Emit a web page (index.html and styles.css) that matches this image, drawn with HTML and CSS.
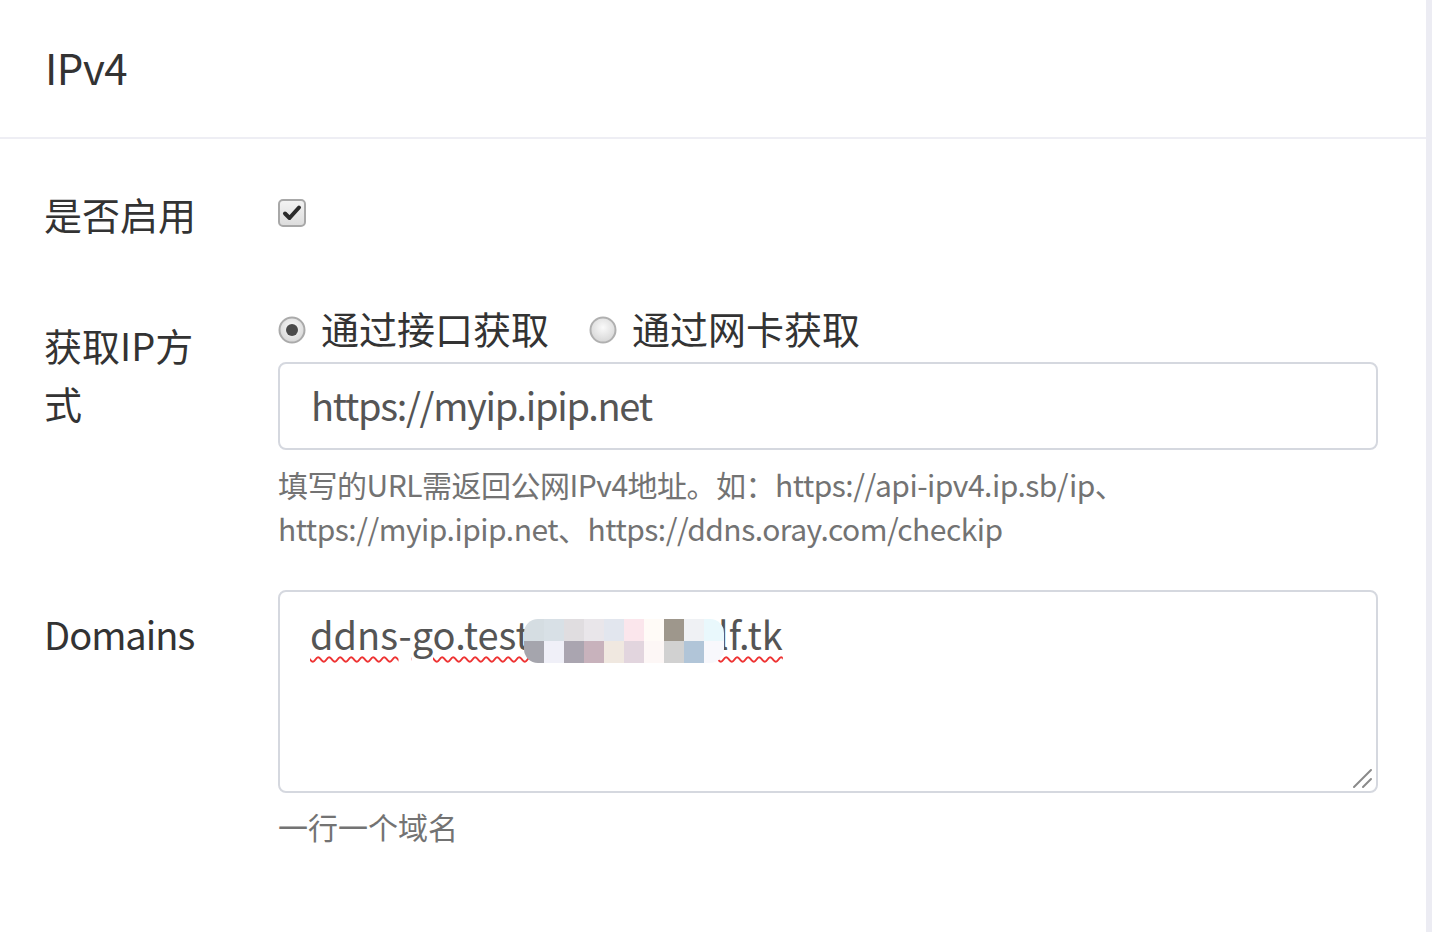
FILE: index.html
```html
<!DOCTYPE html>
<html lang="zh-CN">
<head>
<meta charset="utf-8">
<title>IPv4</title>
<link rel="stylesheet" href="styles.css">
</head>
<body>
<div class="panel">
  <div class="panel-heading"><h3 class="panel-title">IPv4</h3></div>
  <div class="panel-body">
    <div class="form-row row-enable">
      <label class="control-label">是否启用</label>
      <div class="controls">
        <span class="checkbox">
          <svg width="28" height="28" viewBox="0 0 28 28">
            <defs>
              <linearGradient id="cbg" x1="0" y1="0" x2="0" y2="1">
                <stop offset="0" stop-color="#f4f4f4"/>
                <stop offset="1" stop-color="#dcdcdc"/>
              </linearGradient>
            </defs>
            <rect x="1" y="1" width="26" height="26" rx="4" fill="url(#cbg)" stroke="#a8a8a8" stroke-width="2"/>
            <path d="M7 14.5 L11.5 19 L21 8.5" fill="none" stroke="#2b2b2b" stroke-width="4" stroke-linecap="round" stroke-linejoin="round"/>
          </svg>
        </span>
      </div>
    </div>

    <div class="form-row row-ip">
      <label class="control-label">获取IP方式</label>
      <div class="controls">
        <div class="radios">
          <label class="radio">
            <svg width="28" height="28" viewBox="0 0 28 28">
              <defs>
                <radialGradient id="rg1" cx="0.5" cy="0.4" r="0.6">
                  <stop offset="0" stop-color="#fafafa"/>
                  <stop offset="1" stop-color="#d6d6d6"/>
                </radialGradient>
              </defs>
              <circle cx="14" cy="14" r="12.5" fill="url(#rg1)" stroke="#aaaaaa" stroke-width="2"/>
              <circle cx="14" cy="14" r="6" fill="#4a4a4a"/>
            </svg>
            <span>通过接口获取</span>
          </label>
          <label class="radio">
            <svg width="28" height="28" viewBox="0 0 28 28">
              <defs>
                <radialGradient id="rg2" cx="0.5" cy="0.4" r="0.6">
                  <stop offset="0" stop-color="#fafafa"/>
                  <stop offset="1" stop-color="#d6d6d6"/>
                </radialGradient>
              </defs>
              <circle cx="14" cy="14" r="12.5" fill="url(#rg2)" stroke="#b0b0b0" stroke-width="2"/>
            </svg>
            <span>通过网卡获取</span>
          </label>
        </div>
        <div class="form-control input">https://myip.ipip.net</div>
        <p class="help-block">填写的URL需返回公网IPv4地址。如：https://api-ipv4.ip.sb/ip、<br>https://myip.ipip.net、https://ddns.oray.com/checkip</p>
      </div>
    </div>

    <div class="form-row row-domains">
      <label class="control-label latin-label">Domains</label>
      <div class="controls">
        <div class="form-control textarea"><span class="typo">ddns</span>-<span class="typo">go.test<span class="mosaic"><span class="tile" style="background:#d5dde2"></span><span class="tile" style="background:#d8e0e6"></span><span class="tile" style="background:#e0dde0"></span><span class="tile" style="background:#e9e6ea"></span><span class="tile" style="background:#e2e6ee"></span><span class="tile" style="background:#fbe6ec"></span><span class="tile" style="background:#fffbf7"></span><span class="tile" style="background:#9e978c"></span><span class="tile" style="background:#eff1f4"></span><span class="tile" style="background:#e9f8fc"></span><span class="tile" style="background:#a5a5ad"></span><span class="tile" style="background:#f0f0f8"></span><span class="tile" style="background:#aaa5b0"></span><span class="tile" style="background:#c8b2bc"></span><span class="tile" style="background:#f0e8e0"></span><span class="tile" style="background:#e2d5de"></span><span class="tile" style="background:#fdf7f6"></span><span class="tile" style="background:#d1d1d1"></span><span class="tile" style="background:#b1c5d8"></span><span class="tile" style="background:#f8f8fc"></span></span>lf.tk</span>
          <svg class="grip" width="22" height="22" viewBox="0 0 22 22">
            <path d="M3 20 L20 3 M12 20 L20 12" stroke="#8a8a8a" stroke-width="2" stroke-linecap="round" fill="none"/>
          </svg>
        </div>
        <p class="help-block">一行一个域名</p>
      </div>
    </div>
  </div>
</div>
</body>
</html>
```

FILE: styles.css
```css
html, body {
  margin: 0;
  padding: 0;
}
body {
  background: #ececf3;
  font-family: "Noto Sans CJK SC", "Noto Sans", sans-serif;
  color: #333333;
  width: 1432px;
  height: 932px;
  overflow: hidden;
}
.panel {
  width: 1426px;
  height: 932px;
  background: #ffffff;
}
.panel-heading {
  height: 137px;
  border-bottom: 2px solid #eeeef4;
  box-sizing: content-box;
  display: flex;
  align-items: center;
  padding-left: 45px;
}
.panel-title {
  margin: 0;
  font-size: 42px;
  font-weight: 400;
  color: #333;
  line-height: 1;
  padding-bottom: 4px;
  letter-spacing: -0.5px;
}
.panel-body {
  padding: 46px 48px 0 44px;
}
.form-row {
  display: grid;
  grid-template-columns: 234px 1100px;
}
.control-label {
  font-size: 38px;
  line-height: 58px;
  color: #333;
  width: 160px;
}
.latin-label {
  letter-spacing: -1px;
}
.row-enable .controls { padding-top: 14px; }
.checkbox { display: block; width: 28px; height: 28px; }
.checkbox svg { display: block; }

.row-ip { margin-top: 60px; }
.row-ip .control-label { padding-top: 13px; }
.radios {
  display: flex;
  align-items: center;
  height: 52px;
  gap: 40px;
  margin-top: 1px;
}
.radio {
  display: flex;
  align-items: center;
  gap: 15px;
  font-size: 38px;
  color: #333;
  line-height: 52px;
}
.radio span { position: relative; top: -2px; }
.radio svg { display: block; flex: none; }
.form-control {
  box-sizing: border-box;
  width: 1100px;
  border: 2px solid #d5d8df;
  border-radius: 8px;
  background: #fff;
  color: #555;
  font-size: 38px;
}
.input {
  margin-top: 6px;
  height: 88px;
  line-height: 82px;
  padding-left: 31px;
  letter-spacing: -1.3px;
}
.help-block {
  margin: 12px 0 0;
  font-size: 30px;
  line-height: 44px;
  color: #737373;
  letter-spacing: -0.5px;
}
.row-domains { margin-top: 40px; }
.row-domains .control-label { padding-top: 15px; }
.textarea {
  position: relative;
  height: 203px;
  padding: 16px 0 0 30px;
  line-height: 52px;
  letter-spacing: 0;
}
.typo {
  text-decoration: underline wavy #ee3333;
  text-decoration-thickness: 1.5px;
  text-underline-offset: 6px;
}
.mosaic {
  display: inline-grid;
  grid-template-columns: repeat(10, 20px);
  grid-template-rows: 22px 22px;
  vertical-align: -14px;
  border-radius: 14px;
  overflow: hidden;
  margin-right: -6px;
  margin-left: -6px;
  position: relative;
  top: -23px;
}
.tile { display: block; }
.grip {
  position: absolute;
  right: 3px;
  bottom: 2px;
}
.row-domains .help-block { margin-top: 11px; letter-spacing: 0; }
```
